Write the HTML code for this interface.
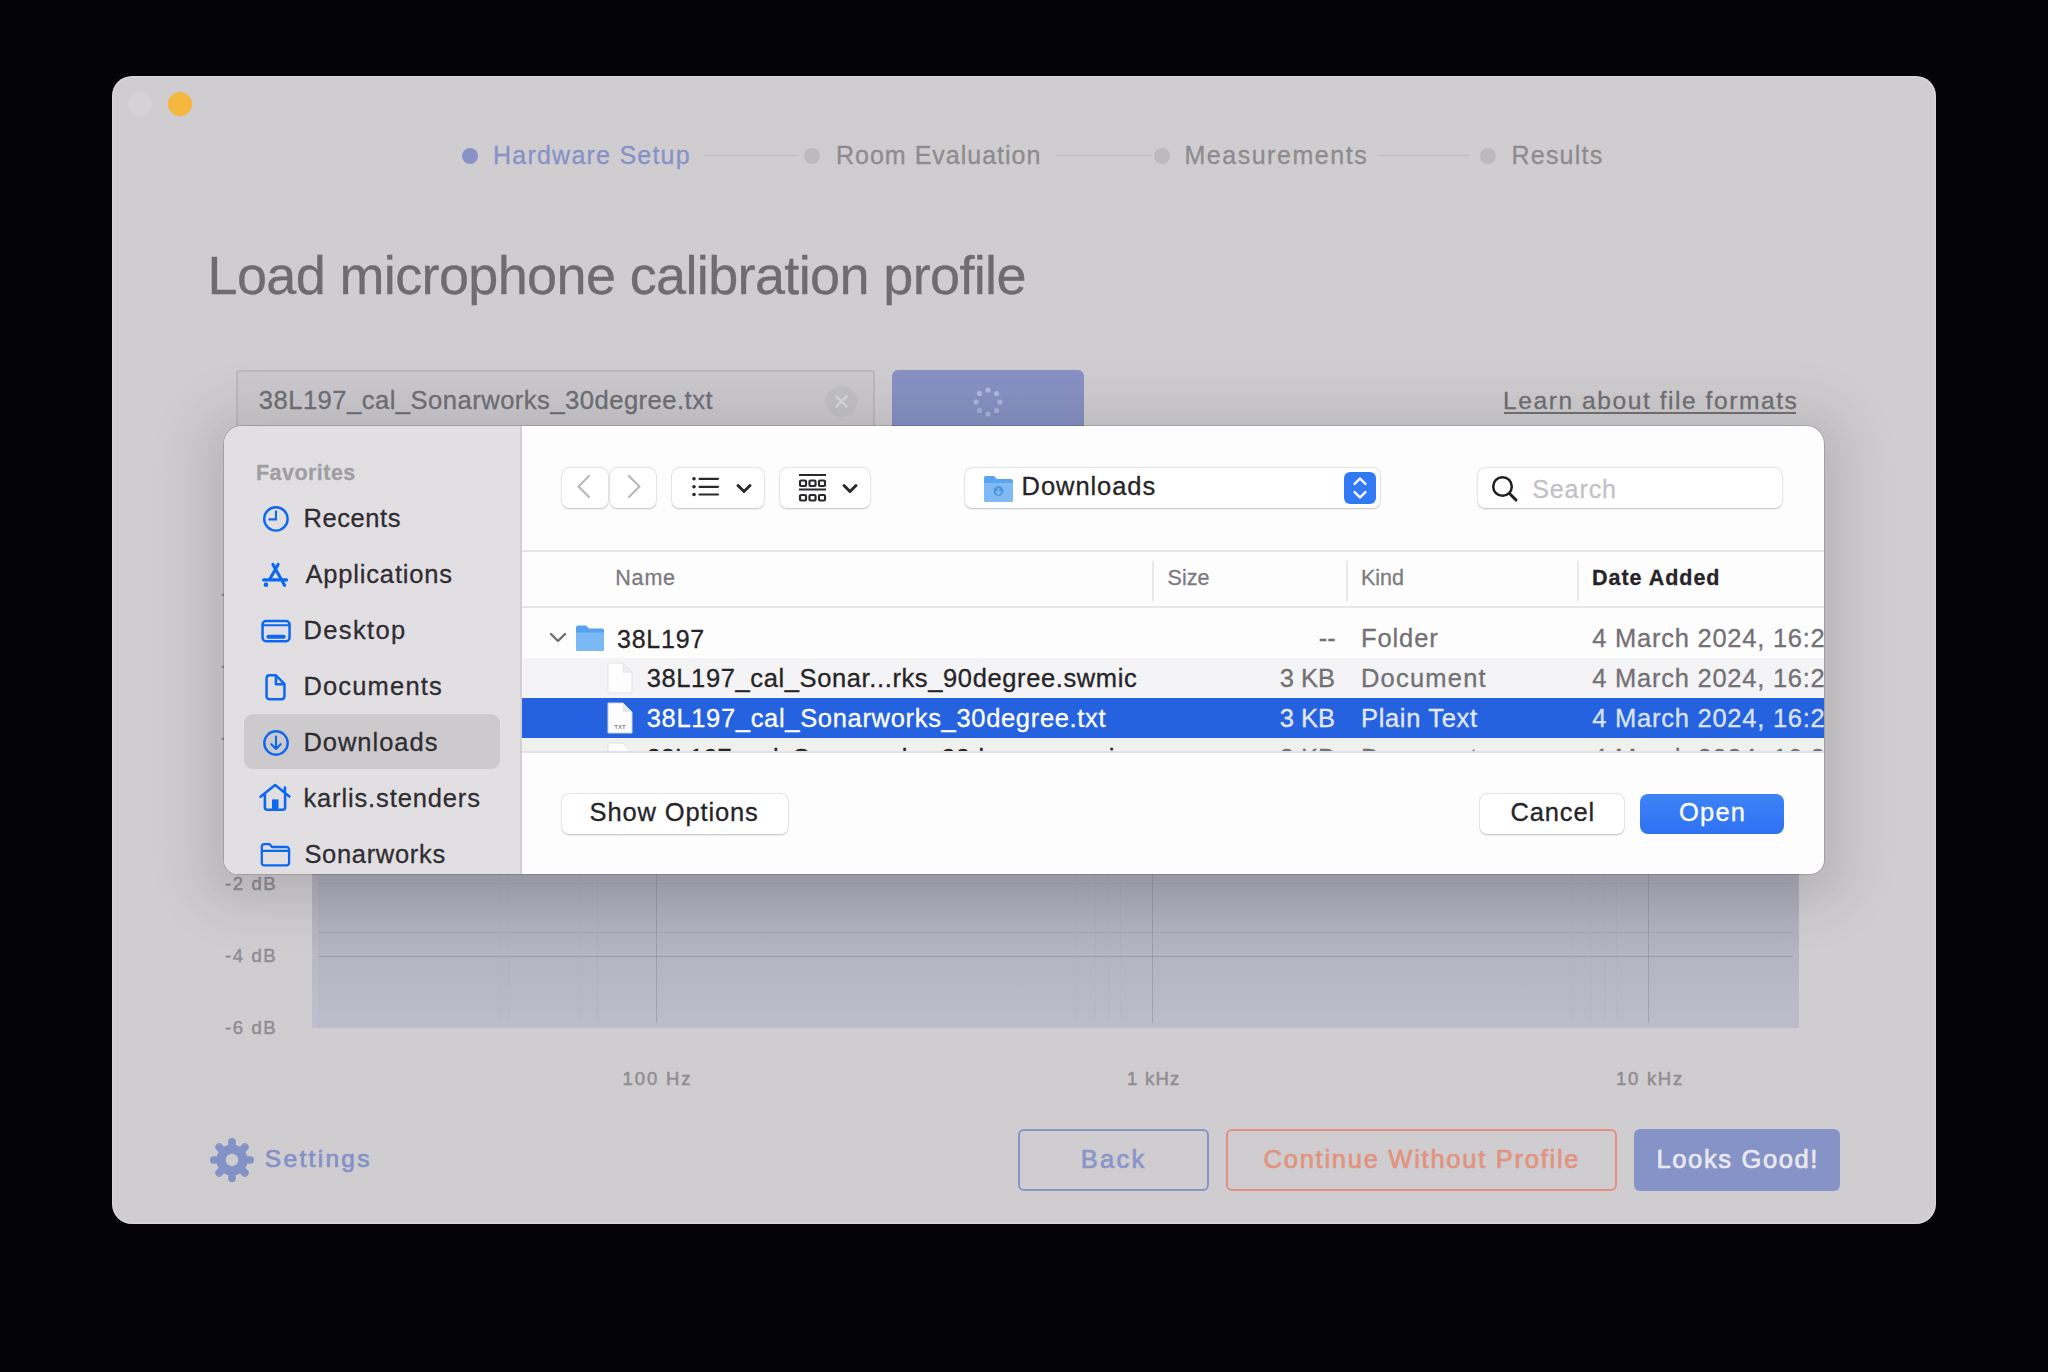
<!DOCTYPE html>
<html><head><meta charset="utf-8">
<style>
*{margin:0;padding:0;box-sizing:border-box}
html,body{width:2048px;height:1372px;overflow:hidden;background:#040306}
body{position:relative;font-family:"Liberation Sans",sans-serif}
.t{position:absolute;white-space:pre;line-height:1;-webkit-text-stroke-width:0.3px}
.a{position:absolute}
</style></head><body>
<div class="a" style="left:112px;top:76px;width:1824px;height:1148px;border-radius:20px;background:#cfcdd0;box-shadow:inset 0 0 0 1.5px rgba(255,255,255,0.18)"></div>
<div class="a" style="left:128px;top:92px;width:24px;height:24px;border-radius:50%;background:#d4d2d6"></div>
<div class="a" style="left:168px;top:92px;width:24px;height:24px;border-radius:50%;background:#f5b73d"></div>
<div class="a" style="left:462px;top:148px;width:16px;height:16px;border-radius:50%;background:#8792c6"></div>
<div class="t" style="left:493.00px;top:142.95px;font-size:25px;color:#8792c6;font-weight:400;letter-spacing:1.231px;">Hardware Setup</div>
<div class="a" style="left:704px;top:154.5px;width:95px;height:1.5px;background:#bcbabe"></div>
<div class="a" style="left:804px;top:148px;width:16px;height:16px;border-radius:50%;background:#bcbabe"></div>
<div class="t" style="left:836.00px;top:142.95px;font-size:25px;color:#8d8b8f;font-weight:400;letter-spacing:1.000px;">Room Evaluation</div>
<div class="a" style="left:1056px;top:154.5px;width:96px;height:1.5px;background:#bcbabe"></div>
<div class="a" style="left:1154px;top:148px;width:16px;height:16px;border-radius:50%;background:#bcbabe"></div>
<div class="t" style="left:1184.40px;top:142.95px;font-size:25px;color:#8d8b8f;font-weight:400;letter-spacing:1.536px;">Measurements</div>
<div class="a" style="left:1378px;top:154.5px;width:91px;height:1.5px;background:#bcbabe"></div>
<div class="a" style="left:1480px;top:148px;width:16px;height:16px;border-radius:50%;background:#bcbabe"></div>
<div class="t" style="left:1511.50px;top:142.95px;font-size:25px;color:#8d8b8f;font-weight:400;letter-spacing:1.217px;">Results</div>
<div class="t" style="left:207.50px;top:248.30px;font-size:54px;color:#6e6c71;font-weight:400;letter-spacing:-0.632px;">Load microphone calibration profile</div>
<div class="a" style="left:236px;top:370px;width:639px;height:80px;background:#cbc9ce;border:2px solid #bbb9be;border-radius:3px"></div>
<div class="t" style="left:258.80px;top:388.24px;font-size:25.6px;color:#717074;font-weight:400;letter-spacing:0.470px;">38L197_cal_Sonarworks_30degree.txt</div>
<svg class="a" style="left:825px;top:385px" width="33" height="33" viewBox="0 0 33 33"><circle cx="16.5" cy="16.5" r="15.5" fill="#c2c1c5"/><path d="M11.5 11.5L21.5 21.5M21.5 11.5L11.5 21.5" stroke="#d9d8dc" stroke-width="2.6" stroke-linecap="round"/></svg>
<div class="a" style="left:892px;top:370px;width:192px;height:80px;background:linear-gradient(#8991c5,#8592c2);border-radius:6px"></div>
<svg class="a" style="left:958px;top:371.5px" width="60" height="60" viewBox="0 0 60 60"><circle cx="30.00" cy="18.00" r="2.6" fill="#b7bde0" opacity="0.95"/><circle cx="38.49" cy="21.51" r="2.6" fill="#b7bde0" opacity="0.9"/><circle cx="42.00" cy="30.00" r="2.6" fill="#b7bde0" opacity="0.85"/><circle cx="38.49" cy="38.49" r="2.6" fill="#b7bde0" opacity="0.8"/><circle cx="30.00" cy="42.00" r="2.6" fill="#b7bde0" opacity="0.75"/><circle cx="21.51" cy="38.49" r="2.6" fill="#b7bde0" opacity="0.7"/><circle cx="18.00" cy="30.00" r="2.6" fill="#b7bde0" opacity="0.9"/><circle cx="21.51" cy="21.51" r="2.6" fill="#b7bde0" opacity="1.0"/></svg>
<div class="t" style="left:1503.00px;top:388.59px;font-size:24.6px;color:#717074;font-weight:400;letter-spacing:1.543px;">Learn about file formats</div>
<div class="a" style="left:1504px;top:412px;width:292px;height:2px;background:#747277"></div>
<div class="a" style="left:312px;top:580px;width:1487px;height:448px;background:linear-gradient(#a3a3b0,#a9aab7 62%,#bbbdca)"></div>
<div class="a" style="left:312px;top:580px;width:6px;height:448px;background:rgba(255,255,255,0.06)"></div>
<div class="a" style="left:318px;top:883px;width:1475px;height:1px;background:rgba(120,122,140,0.15)"></div>
<div class="a" style="left:318px;top:932px;width:1475px;height:1px;background:rgba(120,122,140,0.22)"></div>
<div class="a" style="left:318px;top:956px;width:1475px;height:1px;background:rgba(110,112,130,0.35)"></div>
<div class="a" style="left:656px;top:600px;width:1px;height:423px;background:rgba(110,112,130,0.32)"></div>
<div class="a" style="left:1152px;top:600px;width:1px;height:423px;background:rgba(110,112,130,0.32)"></div>
<div class="a" style="left:1648px;top:600px;width:1px;height:423px;background:rgba(110,112,130,0.32)"></div>
<div class="a" style="left:499px;top:600px;width:1px;height:423px;background:rgba(110,112,130,0.05)"></div>
<div class="a" style="left:508px;top:600px;width:1px;height:423px;background:rgba(110,112,130,0.05)"></div>
<div class="a" style="left:579px;top:600px;width:1px;height:423px;background:rgba(110,112,130,0.05)"></div>
<div class="a" style="left:597px;top:600px;width:1px;height:423px;background:rgba(110,112,130,0.05)"></div>
<div class="a" style="left:1075px;top:600px;width:1px;height:423px;background:rgba(110,112,130,0.05)"></div>
<div class="a" style="left:1095px;top:600px;width:1px;height:423px;background:rgba(110,112,130,0.05)"></div>
<div class="a" style="left:1108px;top:600px;width:1px;height:423px;background:rgba(110,112,130,0.05)"></div>
<div class="a" style="left:1120px;top:600px;width:1px;height:423px;background:rgba(110,112,130,0.05)"></div>
<div class="a" style="left:1571px;top:600px;width:1px;height:423px;background:rgba(110,112,130,0.05)"></div>
<div class="a" style="left:1590px;top:600px;width:1px;height:423px;background:rgba(110,112,130,0.05)"></div>
<div class="a" style="left:1604px;top:600px;width:1px;height:423px;background:rgba(110,112,130,0.05)"></div>
<div class="a" style="left:1616px;top:600px;width:1px;height:423px;background:rgba(110,112,130,0.05)"></div>
<div class="t" style="left:221.00px;top:586.27px;font-size:18.5px;color:#8f8d91;font-weight:400;letter-spacing:1.6px;-webkit-text-stroke:0.5px #8f8d91;">+6 dB</div>
<div class="t" style="left:221.00px;top:658.27px;font-size:18.5px;color:#8f8d91;font-weight:400;letter-spacing:1.6px;-webkit-text-stroke:0.5px #8f8d91;">+4 dB</div>
<div class="t" style="left:221.00px;top:730.27px;font-size:18.5px;color:#8f8d91;font-weight:400;letter-spacing:1.6px;-webkit-text-stroke:0.5px #8f8d91;">+2 dB</div>
<div class="t" style="left:233.00px;top:802.27px;font-size:18.5px;color:#8f8d91;font-weight:400;letter-spacing:1.6px;-webkit-text-stroke:0.5px #8f8d91;">0 dB</div>
<div class="t" style="left:225.00px;top:875.27px;font-size:18.5px;color:#8f8d91;font-weight:400;letter-spacing:1.6px;-webkit-text-stroke:0.5px #8f8d91;">-2 dB</div>
<div class="t" style="left:225.00px;top:947.27px;font-size:18.5px;color:#8f8d91;font-weight:400;letter-spacing:1.6px;-webkit-text-stroke:0.5px #8f8d91;">-4 dB</div>
<div class="t" style="left:225.00px;top:1019.27px;font-size:18.5px;color:#8f8d91;font-weight:400;letter-spacing:1.6px;-webkit-text-stroke:0.5px #8f8d91;">-6 dB</div>
<div class="t" style="left:622.60px;top:1070.28px;font-size:18.5px;color:#8f8d91;font-weight:400;letter-spacing:1.880px;-webkit-text-stroke:0.5px #8f8d91;">100 Hz</div>
<div class="t" style="left:1127.00px;top:1070.28px;font-size:18.5px;color:#8f8d91;font-weight:400;letter-spacing:1.250px;-webkit-text-stroke:0.5px #8f8d91;">1 kHz</div>
<div class="t" style="left:1616.00px;top:1070.28px;font-size:18.5px;color:#8f8d91;font-weight:400;letter-spacing:1.720px;-webkit-text-stroke:0.5px #8f8d91;">10 kHz</div>
<svg class="a" style="left:208px;top:1136px" width="48" height="48" viewBox="-24 -24 48 48"><g fill="#8393c6"><circle r="15.5"/><rect x="-3.8" y="-22" width="7.6" height="10" rx="3.6" transform="rotate(0)"/><rect x="-3.8" y="-22" width="7.6" height="10" rx="3.6" transform="rotate(45)"/><rect x="-3.8" y="-22" width="7.6" height="10" rx="3.6" transform="rotate(90)"/><rect x="-3.8" y="-22" width="7.6" height="10" rx="3.6" transform="rotate(135)"/><rect x="-3.8" y="-22" width="7.6" height="10" rx="3.6" transform="rotate(180)"/><rect x="-3.8" y="-22" width="7.6" height="10" rx="3.6" transform="rotate(225)"/><rect x="-3.8" y="-22" width="7.6" height="10" rx="3.6" transform="rotate(270)"/><rect x="-3.8" y="-22" width="7.6" height="10" rx="3.6" transform="rotate(315)"/></g><circle r="6.2" fill="#cfcdd0"/></svg>
<div class="t" style="left:264.80px;top:1146.77px;font-size:24.5px;color:#8391c8;font-weight:400;letter-spacing:2.314px;-webkit-text-stroke:0.7px #8391c8;">Settings</div>
<div class="a" style="left:1018px;top:1129px;width:191px;height:62px;border:2px solid #8893c7;border-radius:6px"></div>
<div class="t" style="left:1080.70px;top:1147.12px;font-size:25.5px;color:#8a95c8;font-weight:400;letter-spacing:2.300px;-webkit-text-stroke:0.7px #8a95c8;">Back</div>
<div class="a" style="left:1226px;top:1129px;width:391px;height:62px;border:2px solid #e3907f;border-radius:6px"></div>
<div class="t" style="left:1263.60px;top:1147.12px;font-size:25.5px;color:#e2937f;font-weight:400;letter-spacing:1.735px;-webkit-text-stroke:0.7px #e2937f;">Continue Without Profile</div>
<div class="a" style="left:1634px;top:1129px;width:206px;height:62px;background:#8593c6;border-radius:6px"></div>
<div class="t" style="left:1656.50px;top:1147.12px;font-size:25.5px;color:#eae9f1;font-weight:400;letter-spacing:1.630px;-webkit-text-stroke:0.7px #eae9f1;">Looks Good!</div>
<div class="a" style="left:224px;top:426px;width:1600px;height:448px;border-radius:18px 18px 14px 14px;background:#fefdfe;overflow:hidden;box-shadow:0 6px 50px 32px rgba(0,0,0,0.075),0 14px 40px rgba(0,0,0,0.06),0 0 0 1px rgba(0,0,0,0.14)">
<div class="a" style="left:0;top:0;width:297px;height:448px;background:#e2dfe3"></div>
<div class="a" style="left:296px;top:0;width:2px;height:448px;background:#d1cfd3"></div>
</div>
<div class="t" style="left:256.00px;top:463.03px;font-size:21.5px;color:#a09ea2;font-weight:700;letter-spacing:0.462px;">Favorites</div>
<div class="a" style="left:244px;top:714px;width:256px;height:55px;border-radius:9px;background:#cdcacd"></div>
<div class="t" style="left:303.40px;top:506.12px;font-size:25.5px;color:#2f2d32;font-weight:400;letter-spacing:0.600px;">Recents</div>
<div class="t" style="left:305.40px;top:562.12px;font-size:25.5px;color:#2f2d32;font-weight:400;letter-spacing:0.836px;">Applications</div>
<div class="t" style="left:303.40px;top:618.12px;font-size:25.5px;color:#2f2d32;font-weight:400;letter-spacing:1.383px;">Desktop</div>
<div class="t" style="left:303.40px;top:673.93px;font-size:25.5px;color:#2f2d32;font-weight:400;letter-spacing:1.175px;">Documents</div>
<div class="t" style="left:303.40px;top:729.83px;font-size:25.5px;color:#2f2d32;font-weight:400;letter-spacing:0.988px;">Downloads</div>
<div class="t" style="left:303.40px;top:786.12px;font-size:25.5px;color:#2f2d32;font-weight:400;letter-spacing:0.871px;">karlis.stenders</div>
<div class="t" style="left:304.40px;top:841.83px;font-size:25.5px;color:#2f2d32;font-weight:400;letter-spacing:0.678px;">Sonarworks</div>
<svg class="a" style="left:260px;top:503px" width="32" height="32" viewBox="0 0 32 32"><g fill="none" stroke="#0d68f0" stroke-linecap="round" stroke-linejoin="round" stroke-width="2.4"><circle cx="15.9" cy="15.9" r="11.7"/><path d="M16 7.5V16.4H8.5" stroke-width="2.1" stroke-linecap="butt" stroke-linejoin="miter"/></g></svg>
<svg class="a" style="left:256px;top:559px" width="36" height="32" viewBox="0 0 36 32"><g fill="none" stroke="#0d68f0" stroke-linecap="round" stroke-linejoin="round" stroke-width="3.1"><path d="M16.9 5.4L28.6 26.3M22.1 5.4L13.8 20.2M7.6 20.9H30.6"/></g><circle cx="10" cy="25.8" r="2.3" fill="#0d68f0"/></svg>
<svg class="a" style="left:258px;top:616px" width="36" height="30" viewBox="0 0 36 30"><g fill="none" stroke="#0d68f0" stroke-linecap="round" stroke-linejoin="round" stroke-width="2.5"><rect x="4.55" y="5" width="27" height="20.2" rx="3.5"/><path d="M4.6 9.2H31.5" stroke-width="2"/></g><rect x="8.4" y="18.8" width="19.3" height="4" rx="1.8" fill="#0d68f0"/></svg>
<svg class="a" style="left:260px;top:672px" width="30" height="32" viewBox="0 0 30 32"><g fill="none" stroke="#0d68f0" stroke-linecap="round" stroke-linejoin="round" stroke-width="2.5"><path d="M9.5 3.35H15.9L24.45 11.9V24.2A3 3 0 0 1 21.45 27.15H9.55A3 3 0 0 1 6.55 24.15V6.35A3 3 0 0 1 9.5 3.35ZM15.9 3.6V12.3H24.2"/></g></svg>
<svg class="a" style="left:260px;top:727px" width="32" height="32" viewBox="0 0 32 32"><g fill="none" stroke="#0d68f0" stroke-linecap="round" stroke-linejoin="round" stroke-width="2.4"><circle cx="16" cy="16" r="11.7"/><path d="M16 9.5V22M11.3 17.2L16 22L20.7 17.2" stroke-width="2.1"/></g></svg>
<svg class="a" style="left:256px;top:781px" width="38" height="32" viewBox="0 0 38 32"><g fill="none" stroke="#0d68f0" stroke-linecap="round" stroke-linejoin="round" stroke-width="2.6"><path d="M4.5 15.7L19.1 4L33.4 15.5M8.9 13.5V26.3Q8.9 28.8 11.2 28.8H26.8Q29.1 28.8 29.1 26.3V13.5M28.9 6.5V11.5"/></g><rect x="16" y="18.4" width="6.5" height="10.4" fill="#0d68f0"/></svg>
<svg class="a" style="left:258px;top:840px" width="36" height="30" viewBox="0 0 36 30"><g fill="none" stroke="#0d68f0" stroke-linecap="round" stroke-linejoin="round" stroke-width="2.3"><path d="M6.3 4.2H11.7L14 7H28.6A2.5 2.5 0 0 1 31.1 9.5V22.9A2.5 2.5 0 0 1 28.6 25.4H6.3A2.5 2.5 0 0 1 3.8 22.9V6.7A2.5 2.5 0 0 1 6.3 4.2ZM3.8 10.8H31"/></g></svg>
<div class="a" style="left:562px;top:468px;width:46px;height:40px;border-radius:7px;background:#ffffff;box-shadow:0 0.5px 2px rgba(0,0,0,0.22),0 0 0 0.5px rgba(0,0,0,0.08)"></div>
<div class="a" style="left:610px;top:468px;width:46px;height:40px;border-radius:7px;background:#ffffff;box-shadow:0 0.5px 2px rgba(0,0,0,0.22),0 0 0 0.5px rgba(0,0,0,0.08)"></div>
<div class="a" style="left:672px;top:468px;width:92px;height:40px;border-radius:7px;background:#ffffff;box-shadow:0 0.5px 2px rgba(0,0,0,0.22),0 0 0 0.5px rgba(0,0,0,0.08)"></div>
<div class="a" style="left:780px;top:468px;width:90px;height:40px;border-radius:7px;background:#ffffff;box-shadow:0 0.5px 2px rgba(0,0,0,0.22),0 0 0 0.5px rgba(0,0,0,0.08)"></div>
<svg class="a" style="left:572px;top:472px" width="24" height="30" viewBox="0 0 24 30"><path d="M17 4L6.5 14.5L17 25" fill="none" stroke="#b9b8bb" stroke-width="2.2" stroke-linecap="round" stroke-linejoin="round"/></svg>
<svg class="a" style="left:622px;top:472px" width="24" height="30" viewBox="0 0 24 30"><path d="M7 4L17.5 14.5L7 25" fill="none" stroke="#b9b8bb" stroke-width="2.2" stroke-linecap="round" stroke-linejoin="round"/></svg>
<svg class="a" style="left:688px;top:472px" width="36" height="30" viewBox="0 0 36 30"><g fill="#29282b"><circle cx="6" cy="6.8" r="1.8"/><circle cx="6" cy="14.8" r="1.8"/><circle cx="6" cy="22.5" r="1.8"/></g><path d="M11.5 6.8H30M11.5 14.8H30M11.5 22.5H30" fill="none" stroke="#29282b" stroke-width="2.2" stroke-linecap="round" stroke-linejoin="round"/></svg>
<svg class="a" style="left:732px;top:478px" width="24" height="20" viewBox="0 0 24 20"><path d="M6 7.5L12 13.5L18 7.5" fill="none" stroke="#29282b" stroke-width="3" stroke-linecap="round" stroke-linejoin="round"/></svg>
<svg class="a" style="left:794px;top:470px" width="38" height="34" viewBox="0 0 38 34"><g fill="none" stroke="#29282b" stroke-width="2.2"><path d="M5 5H32M5 19.5H32"/><rect x="6.0" y="10.5" width="6" height="5.5" rx="1"/><rect x="6.0" y="25" width="6" height="5.5" rx="1"/><rect x="15.5" y="10.5" width="6" height="5.5" rx="1"/><rect x="15.5" y="25" width="6" height="5.5" rx="1"/><rect x="25.0" y="10.5" width="6" height="5.5" rx="1"/><rect x="25.0" y="25" width="6" height="5.5" rx="1"/></g></svg>
<svg class="a" style="left:838px;top:478px" width="24" height="20" viewBox="0 0 24 20"><path d="M6 7.5L12 13.5L18 7.5" fill="none" stroke="#29282b" stroke-width="3" stroke-linecap="round" stroke-linejoin="round"/></svg>
<div class="a" style="left:965px;top:468px;width:415px;height:40px;border-radius:7px;background:#ffffff;box-shadow:0 0.5px 2px rgba(0,0,0,0.22),0 0 0 0.5px rgba(0,0,0,0.08)"></div>
<svg class="a" style="left:982px;top:474px" width="32" height="30" viewBox="0 0 32 30"><path d="M2 4A2 2 0 0 1 4 2H12L15 5H29A2 2 0 0 1 31 7V26A2 2 0 0 1 29 28H4A2 2 0 0 1 2 26Z" fill="#5aa5ee"/><path d="M2 9H31V26A2 2 0 0 1 29 28H4A2 2 0 0 1 2 26Z" fill="#7fbaf5"/><circle cx="16.5" cy="17" r="5" fill="#4f96e2"/><path d="M16.5 14V20M14 17.5L16.5 20L19 17.5" stroke="#8fc3f5" stroke-width="1.3" fill="none"/></svg>
<div class="t" style="left:1021.60px;top:474.43px;font-size:25.5px;color:#262427;font-weight:400;letter-spacing:0.925px;">Downloads</div>
<div class="a" style="left:1344px;top:472px;width:32px;height:32px;border-radius:6px;background:#3279f5"></div>
<svg class="a" style="left:1344px;top:472px" width="32" height="32" viewBox="0 0 32 32"><path d="M10.5 12L16 6.5L21.5 12M10.5 20L16 25.5L21.5 20" fill="none" stroke="#fff" stroke-width="2.4" stroke-linecap="round" stroke-linejoin="round"/></svg>
<div class="a" style="left:1478px;top:468px;width:304px;height:40px;border-radius:7px;background:#ffffff;box-shadow:0 0.5px 2px rgba(0,0,0,0.22),0 0 0 0.5px rgba(0,0,0,0.08)"></div>
<svg class="a" style="left:1488px;top:472px" width="34" height="34" viewBox="0 0 34 34"><circle cx="14.5" cy="14.5" r="9.3" fill="none" stroke="#1f1e21" stroke-width="2.5"/><path d="M21.5 21.5L28 28" stroke="#1f1e21" stroke-width="3" stroke-linecap="round"/></svg>
<div class="t" style="left:1532.20px;top:476.65px;font-size:25px;color:#c3c1c5;font-weight:400;letter-spacing:0.920px;">Search</div>
<div class="a" style="left:0;top:0;width:1824px;height:1372px;overflow:hidden">
<div class="a" style="left:522px;top:550px;width:1302px;height:2px;background:#e6e5e7"></div>
<div class="a" style="left:522px;top:606px;width:1302px;height:2px;background:#e6e5e7"></div>
<div class="a" style="left:1152px;top:561px;width:2px;height:40px;background:#e8e7e9"></div>
<div class="a" style="left:1346px;top:561px;width:2px;height:40px;background:#e8e7e9"></div>
<div class="a" style="left:1577px;top:561px;width:2px;height:40px;background:#e8e7e9"></div>
<div class="t" style="left:615.30px;top:567.93px;font-size:21.5px;color:#7c7a7e;font-weight:400;letter-spacing:0.800px;">Name</div>
<div class="t" style="left:1167.60px;top:567.93px;font-size:21.5px;color:#7c7a7e;font-weight:400;">Size</div>
<div class="t" style="left:1361.00px;top:567.93px;font-size:21.5px;color:#7c7a7e;font-weight:400;">Kind</div>
<div class="t" style="left:1592.00px;top:567.93px;font-size:21.5px;color:#262427;font-weight:700;letter-spacing:0.978px;">Date Added</div>
<div class="a" style="left:522px;top:658px;width:1302px;height:40px;background:#f4f3f5"></div>
<div class="a" style="left:522px;top:698px;width:1302px;height:40px;background:#2562df"></div>
<div class="a" style="left:522px;top:738px;width:1302px;height:14px;background:#eff1ee"></div>
<svg class="a" style="left:546px;top:628px" width="24" height="20" viewBox="0 0 24 20"><path d="M5 6L12 13L19 6" fill="none" stroke="#6f6e72" stroke-width="2.4" stroke-linecap="round" stroke-linejoin="round"/></svg>
<svg class="a" style="left:574px;top:624px" width="32" height="30" viewBox="0 0 32 30"><path d="M2 3.5A2 2 0 0 1 4 1.5H12L15 4.5H28A2 2 0 0 1 30 6.5V25A2 2 0 0 1 28 27H4A2 2 0 0 1 2 25Z" fill="#56a2ee"/><path d="M2 8.5H30V25A2 2 0 0 1 28 27H4A2 2 0 0 1 2 25Z" fill="#7ab8f6"/></svg>
<div class="t" style="left:617.00px;top:626.55px;font-size:25px;color:#262427;font-weight:400;letter-spacing:0.760px;">38L197</div>
<div class="t" style="left:1318.70px;top:626.12px;font-size:25.5px;color:#737175;font-weight:400;">--</div>
<div class="t" style="left:1361.00px;top:626.12px;font-size:25.5px;color:#737175;font-weight:400;letter-spacing:0.900px;">Folder</div>
<div class="t" style="left:1592.30px;top:626.12px;font-size:25.5px;color:#737175;font-weight:400;letter-spacing:0.75px;">4 March 2024, 16:24</div>
<svg class="a" style="left:606px;top:662px" width="28" height="32" viewBox="0 0 28 32"><path d="M2 1H17L26 10V31H2Z" fill="#fdfdfd" stroke="#e4e4e6" stroke-width="1"/><path d="M17 1V10H26" fill="#efefef" stroke="#e4e4e6" stroke-width="1"/></svg>
<div class="t" style="left:646.70px;top:665.93px;font-size:25.5px;color:#262427;font-weight:400;letter-spacing:0.619px;">38L197_cal_Sonar...rks_90degree.swmic</div>
<div class="t" style="left:1279.70px;top:665.93px;font-size:25.5px;color:#737175;font-weight:400;">3 KB</div>
<div class="t" style="left:1361.00px;top:665.93px;font-size:25.5px;color:#737175;font-weight:400;letter-spacing:1.200px;">Document</div>
<div class="t" style="left:1592.30px;top:665.93px;font-size:25.5px;color:#737175;font-weight:400;letter-spacing:0.75px;">4 March 2024, 16:24</div>
<svg class="a" style="left:606px;top:702px" width="28" height="32" viewBox="0 0 28 32"><path d="M2 1H17L26 10V31H2Z" fill="#fdfdfd" stroke="#d0d0d0" stroke-width="1"/><path d="M17 1V10H26" fill="#e6e6e6"/><text x="14" y="27" font-size="6" text-anchor="middle" fill="#555" font-family="Liberation Sans">TXT</text></svg>
<div class="t" style="left:646.70px;top:705.83px;font-size:25.5px;color:#ffffff;font-weight:400;letter-spacing:0.676px;">38L197_cal_Sonarworks_30degree.txt</div>
<div class="t" style="left:1279.70px;top:705.83px;font-size:25.5px;color:#e4e8f8;font-weight:400;">3 KB</div>
<div class="t" style="left:1361.00px;top:705.83px;font-size:25.5px;color:#e4e8f8;font-weight:400;letter-spacing:0.656px;">Plain Text</div>
<div class="t" style="left:1592.30px;top:705.83px;font-size:25.5px;color:#dde3f7;font-weight:400;letter-spacing:0.75px;">4 March 2024, 16:24</div>
</div>
<div class="a" style="left:522px;top:738px;width:1302px;height:14px;overflow:hidden">
<svg class="a" style="left:84px;top:4px" width="28" height="32" viewBox="0 0 28 32"><path d="M2 1H17L26 10V31H2Z" fill="#fdfdfd" stroke="#e0e0e2" stroke-width="1"/></svg>
<div class="t" style="left:124.70px;top:7.82px;font-size:25.5px;color:#262427;font-weight:400;">38L197_cal_Sonarworks_90degree.swmic</div>
<div class="t" style="left:757.70px;top:7.82px;font-size:25.5px;color:#737175;font-weight:400;">3 KB</div>
<div class="t" style="left:839.00px;top:7.82px;font-size:25.5px;color:#737175;font-weight:400;">Document</div>
<div class="t" style="left:1070.30px;top:7.82px;font-size:25.5px;color:#737175;font-weight:400;letter-spacing:0.75px;">4 March 2024, 16:24</div>
</div>
<div class="a" style="left:522px;top:751px;width:1302px;height:1.5px;background:#e2e1e4"></div>
<div class="a" style="left:562px;top:794px;width:226px;height:40px;border-radius:7px;background:#ffffff;box-shadow:0 0.5px 2px rgba(0,0,0,0.22),0 0 0 0.5px rgba(0,0,0,0.08)"></div>
<div class="t" style="left:589.60px;top:800.03px;font-size:25.5px;color:#262427;font-weight:400;letter-spacing:0.855px;">Show Options</div>
<div class="a" style="left:1480px;top:794px;width:144px;height:40px;border-radius:7px;background:#ffffff;box-shadow:0 0.5px 2px rgba(0,0,0,0.22),0 0 0 0.5px rgba(0,0,0,0.08)"></div>
<div class="t" style="left:1510.50px;top:800.33px;font-size:25.5px;color:#262427;font-weight:400;letter-spacing:0.860px;">Cancel</div>
<div class="a" style="left:1640px;top:794px;width:144px;height:40px;border-radius:8px;background:linear-gradient(#3d83f7,#2f71f3)"></div>
<div class="t" style="left:1679.00px;top:800.33px;font-size:25.5px;color:#ffffff;font-weight:400;letter-spacing:1.200px;">Open</div>
</body></html>
